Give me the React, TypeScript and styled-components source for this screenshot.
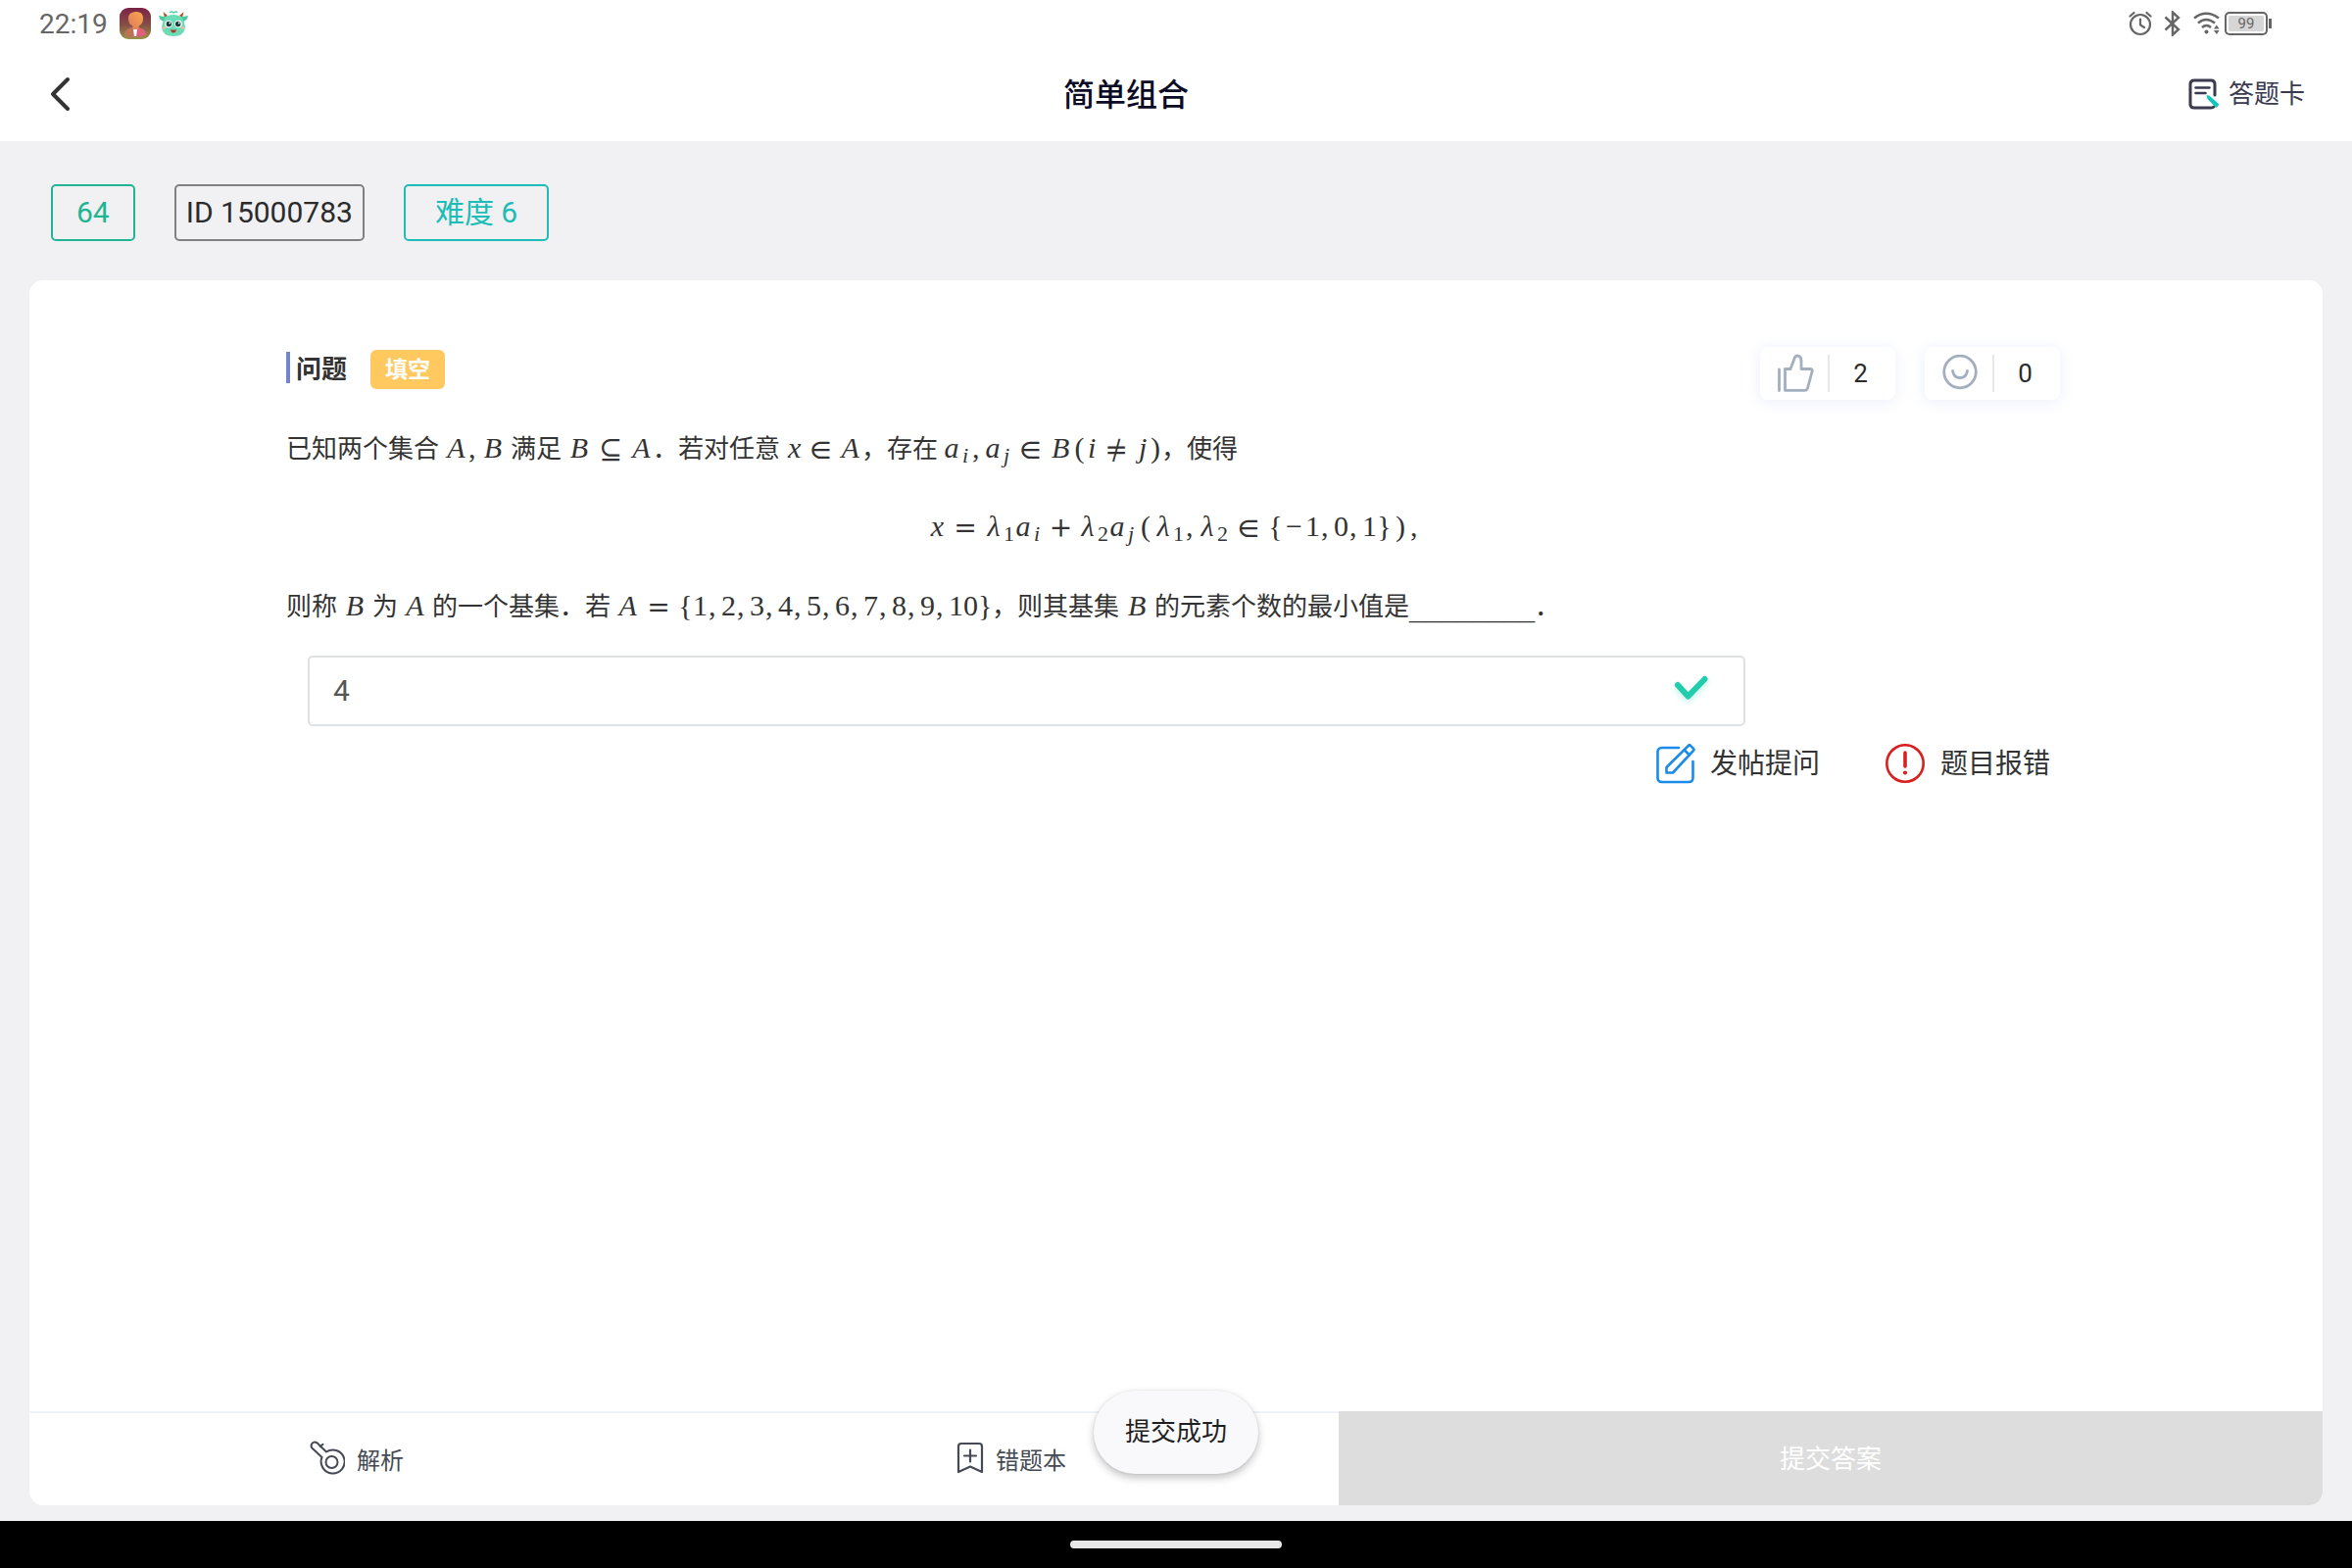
import React from "react";
import styled, { createGlobalStyle } from "styled-components";

const sans = `Roboto, "Noto Sans CJK SC", sans-serif`;
const cjk = `"Noto Sans CJK SC", Roboto, sans-serif`;

const GlobalStyle = createGlobalStyle`
  *, *::before, *::after { box-sizing: border-box; }
  body { margin: 0; background: #f1f1f4; font-family: ${sans}; color: #333; }
  button { border: 0; padding: 0; background: none; font: inherit; color: inherit; cursor: pointer; }
  svg { display: block; flex: none; }
`;

const Page = styled.div`
  display: flex;
  flex-direction: column;
  min-height: 100vh;
`;

const StatusBar = styled.div`
  display: flex;
  align-items: center;
  justify-content: space-between;
  height: 48px;
  padding: 0 82px 0 40px;
  background: #fff;
  color: #666;
`;

const StatusGroup = styled.div<{ $gap: number }>`
  display: flex;
  align-items: center;
  gap: ${(p) => p.$gap}px;
`;

const Clock = styled.time`
  margin-right: 4px;
  padding-top: 2px;
  font-size: 28px;
  line-height: 46px;
`;

const Header = styled.header`
  display: flex;
  align-items: center;
  height: 96px;
  padding: 0 48px;
  background: #fff;
`;

const BackButton = styled.button`
  display: flex;
  padding: 4px 0;
`;

const Title = styled.h1`
  flex: 1;
  margin: 0;
  padding: 0 6px 4px 0;
  text-align: center;
  font-family: ${cjk};
  font-size: 32px;
  font-weight: 500;
  line-height: 48px;
  color: #0b0b26;
`;

const SheetButton = styled.button`
  display: flex;
  align-items: center;
  gap: 8px;
  font-size: 26px;
  line-height: 40px;
  color: #3a3a50;
`;

const Main = styled.main`
  flex: 1;
  display: flex;
  flex-direction: column;
  padding: 44px 30px 16px;
`;

const Tags = styled.div`
  display: flex;
  gap: 40px;
  height: 98px;
  padding: 0 22px 40px;
`;

const Tag = styled.span<{ $color: string; $text?: string; $pad: number }>`
  border: 2px solid ${(p) => p.$color};
  border-radius: 5px;
  padding: 0 ${(p) => p.$pad}px;
  font-size: 30px;
  line-height: 54px;
  color: ${(p) => p.$text || p.$color};
`;

const Card = styled.section`
  flex: 1;
  display: flex;
  flex-direction: column;
  border-radius: 14px;
  background: #fff;
  overflow: hidden;
`;

const Question = styled.article`
  flex: 1;
  padding: 68px 262px 0;
`;

const QuestionHead = styled.div`
  display: flex;
  align-items: center;
  justify-content: space-between;
  margin-bottom: 28px;
  padding-right: 6px;
`;

const Heading = styled.div`
  display: flex;
  align-items: center;
  height: 54px;
  padding-bottom: 12px;
`;

const SectionTitle = styled.h2`
  margin: 0 24px 0 0;
  border-left: 4px solid #7385d0;
  padding-left: 6px;
  font-family: ${cjk};
  font-size: 26px;
  font-weight: 600;
  line-height: 32px;
  color: #333;
`;

const Kind = styled.span`
  border-radius: 6px;
  padding: 0 15px 4px;
  margin-top: 4px;
  background: #ffc95f;
  color: #fff;
  font-family: ${cjk};
  font-size: 23px;
  font-weight: 700;
  line-height: 36px;
`;

const Votes = styled.div`
  display: flex;
  gap: 30px;
`;

const Vote = styled.button`
  display: flex;
  align-items: center;
  width: 138px;
  height: 54px;
  padding-left: 17px;
  border-radius: 8px;
  background: #fff;
  box-shadow: 0 2px 14px rgba(90, 120, 220, 0.13);
  font-size: 26px;
  color: #2b2b2b;
`;

const VoteCount = styled.span`
  flex: 1;
  margin-left: 14px;
  padding-right: 4px;
  border-left: 2px solid #e6e7ec;
  text-align: center;
  line-height: 38px;
`;

const Text = styled.p<{ $center?: boolean }>`
  display: flex;
  flex-wrap: wrap;
  align-items: baseline;
  justify-content: ${(p) => (p.$center ? "center" : "flex-start")};
  margin: 0 0 40px;
  font-family: ${cjk};
  font-size: 26px;
  line-height: 40px;
  color: #333;
`;

const MathRow = styled.span<{ $before: number; $after: number }>`
  display: inline-flex;
  align-items: baseline;
  margin: 0 ${(p) => p.$after}px 0 ${(p) => p.$before}px;
  font-family: "Liberation Serif", serif;
  font-size: 30px;
  line-height: 40px;
`;

const Glyph = styled.span<{ $w: number }>`
  width: ${(p) => p.$w}px;
  text-align: center;
`;

const Variable = styled(Glyph)`
  font-style: italic;
`;

const Comma = styled.span`
  width: 14px;
  padding-left: 1px;
`;

const Relation = styled(Glyph)`
  font-family: "DejaVu Math TeX Gyre", "DejaVu Serif", serif;
  font-size: 28px;
  line-height: 20px;
`;

const Sub = styled.sub<{ $italic?: boolean }>`
  width: ${(p) => (p.$italic ? 12 : 13)}px;
  text-align: center;
  position: relative;
  top: 5px;
  vertical-align: baseline;
  font-size: 22px;
  line-height: 20px;
  font-style: ${(p) => (p.$italic ? "italic" : "normal")};
`;

const Blank = styled.span`
  font-family: "DejaVu Sans", sans-serif;
  font-size: 32px;
  font-weight: 200;
  line-height: 20px;
`;

const AnswerRow = styled.label`
  display: flex;
  align-items: center;
  width: 1467px;
  max-width: 100%;
  height: 72px;
  margin: -9px 0 0 22px;
  padding: 0 30px 0 24px;
  border: 2px solid #dde1e6;
  border-radius: 5px;
`;

const AnswerInput = styled.input`
  flex: 1;
  min-width: 0;
  border: 0;
  padding: 0;
  outline: 0;
  background: transparent;
  font-family: ${sans};
  font-size: 30px;
  line-height: 40px;
  color: #555;
`;

const Actions = styled.div`
  display: flex;
  justify-content: flex-end;
  gap: 66px;
  margin-top: 18px;
  padding-right: 16px;
`;

const Action = styled.button`
  display: flex;
  align-items: center;
  gap: 15px;
  font-size: 28px;
  line-height: 42px;
  color: #333;
`;

const BottomBar = styled.footer`
  position: relative;
  display: flex;
  height: 96px;
`;

const Tools = styled.div`
  flex: 1336;
  display: flex;
  border-top: 2px solid #eff3f8;
`;

const Tool = styled.button`
  flex: 1;
  display: flex;
  align-items: center;
  justify-content: center;
  gap: 12px;
  padding-bottom: 2px;
  font-size: 24px;
  color: #454a54;
`;

const Submit = styled.button`
  flex: 1004;
  padding-bottom: 4px;
  background: #ddd;
  font-size: 26px;
  color: #fff;
`;

const Toast = styled.div`
  position: absolute;
  left: 50%;
  bottom: 32px;
  transform: translateX(-50%);
  padding: 22px 32px 23px;
  border-radius: 43px;
  background: #f9f9fc;
  box-shadow: 0 4px 8px rgba(0, 0, 0, 0.24), 0 0 3px rgba(0, 0, 0, 0.08);
  font-size: 26px;
  line-height: 40px;
  white-space: nowrap;
  color: #1f1f22;
`;

const NavBar = styled.div`
  display: flex;
  justify-content: center;
  height: 48px;
  padding-top: 20px;
  background: #000;
`;

const NavHandle = styled.div`
  width: 216px;
  height: 8px;
  border-radius: 4px;
  background: #e9e9e9;
`;

const PortraitIcon = () => (
  <svg width="32" height="36" viewBox="0 0 32 36">
    <defs>
      <linearGradient id="pbg" x1="0" y1="0" x2="0" y2="1">
        <stop offset="0" stopColor="#7c2146" />
        <stop offset="0.55" stopColor="#855046" />
        <stop offset="1" stopColor="#9a9348" />
      </linearGradient>
      <linearGradient id="pface" x1="1" y1="0" x2="0" y2="1">
        <stop offset="0" stopColor="#f5a94c" />
        <stop offset="1" stopColor="#e0785c" />
      </linearGradient>
    </defs>
    <rect y="2" width="32" height="32" rx="9" fill="url(#pbg)" />
    <path d="M5 30c0-5 4-7 8-8h6c5 1 8 3 8 8q-11 3-22 0z" fill="#e0607c" />
    <path d="M5 30c0-5 4-7 8-8l1 9q-5 0-9-1z" fill="#b97450" />
    <path d="M9 12c0-4 4-6 8-6s7 2 7 6-1 7-4 8l-1 4h-5l-1-4c-3-1-4-4-4-8z" fill="url(#pface)" />
    <path d="M14 24h4l-1 7h-2z" fill="#fff" />
  </svg>
);

const CalfIcon = () => (
  <svg width="30" height="28" viewBox="0 0 30 28">
    <path d="M11 3q2-2 4 0 3-2 4 0" fill="none" stroke="#56cfa8" strokeWidth="1.5" />
    <path d="M6 8 4.500 2 9 6zM24 8l1.500-6L21 6z" fill="#a3552f" />
    <path d="M0 6q4 1 7 1v5q-6 0-7-6zM30 6q-4 1-7 1v5q6 0 7-6z" fill="#4cc79f" />
    <path d="M7 7q8-4 16 0 3 4 4 11-1 9-12 9T3 18Q4 11 7 7z" fill="#6bdcb6" />
    <circle cx="10" cy="14.500" r="3.800" fill="#fff" />
    <circle cx="20" cy="14.500" r="3.800" fill="#fff" />
    <circle cx="10.300" cy="14.500" r="2.700" fill="#173a35" />
    <circle cx="19.700" cy="14.500" r="2.700" fill="#173a35" />
    <circle cx="11.300" cy="13.500" r="0.900" fill="#fff" />
    <circle cx="20.700" cy="13.500" r="0.900" fill="#fff" />
    <circle cx="5.500" cy="18.500" r="1.600" fill="#f3b9a0" />
    <circle cx="24.500" cy="18.500" r="1.600" fill="#f3b9a0" />
    <path d="M12 20q3 1 6 0-.5 3.500-3 3.500T12 20z" fill="#b03a2c" />
  </svg>
);

const AlarmIcon = () => (
  <svg width="24" height="26" viewBox="0 0 24 26" fill="none" stroke="#666" strokeWidth="2.200" strokeLinecap="round">
    <circle cx="12" cy="14" r="10" />
    <path d="M12 8.500v6l4 2.500M1.500 5.500l4-3.500M22.500 5.500l-4-3.500" />
  </svg>
);

const BluetoothIcon = () => (
  <svg width="18" height="26" viewBox="0 0 18 26" fill="none" stroke="#666" strokeWidth="2.400">
    <path d="M1.500 6.500 15 19l-6 5.500v-23L15 7 1.500 19.500" />
  </svg>
);

const WifiIcon = () => (
  <svg width="28" height="26" viewBox="0 0 28 26">
    <g fill="none" stroke="#666" strokeWidth="2.500">
      <path d="M1 7.500q12-9.500 25 0M5 12.500q8-7 17 0M9 17q4.500-4 9 0" />
    </g>
    <circle cx="13.500" cy="21.500" r="2" fill="#666" />
    <path d="M21 18.500l2.800-4 2.800 4zM21 20l2.800 4 2.800-4z" fill="#666" />
  </svg>
);

const BatteryShell = styled.span`
  display: flex;
  align-items: center;
  &::after {
    content: "";
    width: 3px;
    height: 10px;
    margin-left: 1px;
    background: #666;
  }
`;

const BatteryLevel = styled.span`
  width: 44px;
  height: 24px;
  border: 2px solid #666;
  border-radius: 5px;
  padding: 2px;
  background: #d6d6d6;
  box-shadow: inset 0 0 0 2px #fff;
  text-align: center;
  font-size: 15px;
  line-height: 17px;
`;

const BackIcon = () => (
  <svg width="24" height="36" viewBox="0 0 24 36" fill="none" stroke="#333" strokeWidth="4" strokeLinecap="round" strokeLinejoin="round">
    <path d="M21 3 6 18l15 15" />
  </svg>
);

const SheetIcon = () => (
  <svg width="34" height="32" viewBox="0 0 34 32" fill="none" strokeLinecap="round">
    <path d="M28 17V6q0-4-4-4H7Q3 2 3 6v20q0 4 4 4h17q2 0 3-1" stroke="#3a3a50" strokeWidth="3" />
    <path d="M8.500 9.500h14M8.500 15h10" stroke="#3a3a50" strokeWidth="2.600" />
    <path d="m19.500 17 3 .8 10 8.700-3 3.500-9-9z" fill="#0fc6bd" />
  </svg>
);

const ThumbIcon = () => (
  <svg width="38" height="40" viewBox="0 0 38 40" fill="none" stroke="#a3aebf" strokeWidth="2.800" strokeLinecap="round" strokeLinejoin="round">
    <path d="M2.500 16v21.500M8.500 15.500h5.500L18.500 3.500Q20 1.300 22.500 2.300q2.500 1 2.500 5v8.200h9q3 0 2 3l-4.500 16.500q-.5 2.300-3 2.300h-20z" />
  </svg>
);

const SmileIcon = () => (
  <svg width="38" height="40" viewBox="0 0 38 40" fill="none" stroke="#a3aebf" strokeWidth="2.800" strokeLinecap="round">
    <circle cx="19" cy="18.500" r="16.300" />
    <path d="M11.500 17.500q1 7 7.500 7t7.500-7" />
  </svg>
);

const CheckIcon = () => (
  <svg width="46" height="40" viewBox="0 0 46 40" fill="none" strokeLinecap="round" strokeLinejoin="round">
    <defs>
      <filter id="soft" x="-30%" y="-30%" width="160%" height="180%">
        <feDropShadow dx="0" dy="3" stdDeviation="3" floodColor="#1fcfac" floodOpacity="0.25" />
      </filter>
    </defs>
    <path d="m9 14 10.500 11.500L36.500 8" stroke="#20cdab" strokeWidth="6" filter="url(#soft)" />
  </svg>
);

const EditIcon = () => (
  <svg width="40" height="42" viewBox="0 0 40 42" fill="none" stroke="#1a8be8" strokeWidth="2.600" strokeLinecap="round" strokeLinejoin="round">
    <path d="M23 4H6Q1.500 4 1.500 8.500v26Q1.500 39 6 39h27q4.500 0 4.500-4.500V18" />
    <path d="M10.500 24 33 1.800q1-1 2 0l3 3q1 1 0 2L17 29.500h-6.500zM28.500 6l5.500 5.500" />
  </svg>
);

const AlertIcon = () => (
  <svg width="42" height="42" viewBox="0 0 42 42">
    <circle cx="21" cy="20" r="18.700" fill="none" stroke="#d8201f" strokeWidth="2.600" />
    <path d="M21 9v14" stroke="#d8201f" strokeWidth="3.600" strokeLinecap="round" />
    <circle cx="21" cy="29.500" r="2.100" fill="#d8201f" />
  </svg>
);

const KeyIcon = () => (
  <svg width="36" height="36" viewBox="0 0 36 36" fill="none" stroke="#454a54" strokeWidth="2" strokeLinecap="round" strokeLinejoin="round">
    <circle cx="22.500" cy="22" r="6" />
    <path d="M12.500 17 2.300 7.500Q.7 5 2.500 2.800 5 .6 7.500 2.300L17 11.500A12 12 0 1 1 12.500 17M10.800 6l2.700-2.200" />
  </svg>
);

const BookmarkIcon = () => (
  <svg width="28" height="34" viewBox="0 0 28 34" fill="none" stroke="#454a54" strokeWidth="2.200" strokeLinecap="round" strokeLinejoin="round">
    <path d="M2 31V5q0-3 3-3h18q3 0 3 3v26l-12-5.500zM14 8.500v12M8 14.500h12" />
  </svg>
);

type Token = [kind: string, text: string, width?: number];

const advance: Record<string, number> = { A: 23, B: 24, x: 17, a: 16, i: 10, j: 14, "λ": 18 };

/* v variable, n upright glyph, r relation, c comma, s/si subscript */
const Formula = ({ tokens, before = 6, after = 6 }: { tokens: Token[]; before?: number; after?: number }) => (
  <MathRow $before={before} $after={after}>
    {tokens.map(([kind, text, width], i) => {
      if (kind === "v") return <Variable key={i} $w={width || advance[text]}>{text}</Variable>;
      if (kind === "r") return <Relation key={i} $w={width || 40}>{text}</Relation>;
      if (kind === "c") return <Comma key={i}>,</Comma>;
      if (kind === "s") return <Sub key={i}>{text}</Sub>;
      if (kind === "si") return <Sub key={i} $italic>{text}</Sub>;
      return <Glyph key={i} $w={width || 15}>{text}</Glyph>;
    })}
  </MathRow>
);

const setTokens: Token[] = ["1", "2", "3", "4", "5", "6", "7", "8", "9"].flatMap(
  (d): Token[] => [["n", d], ["c", ","]]
);

export default function App() {
  const [answer, setAnswer] = React.useState("4");
  return (
    <Page>
      <GlobalStyle />
      <StatusBar>
        <StatusGroup $gap={8}>
          <Clock>22:19</Clock>
          <PortraitIcon />
          <CalfIcon />
        </StatusGroup>
        <StatusGroup $gap={12}>
          <AlarmIcon />
          <BluetoothIcon />
          <StatusGroup $gap={4}>
            <WifiIcon />
            <BatteryShell>
              <BatteryLevel>99</BatteryLevel>
            </BatteryShell>
          </StatusGroup>
        </StatusGroup>
      </StatusBar>
      <Header>
        <BackButton aria-label="返回">
          <BackIcon />
        </BackButton>
        <Title>简单组合</Title>
        <SheetButton>
          <SheetIcon />
          答题卡
        </SheetButton>
      </Header>
      <Main>
        <Tags>
          <Tag $color="#1fb592" $pad={24}>64</Tag>
          <Tag $color="#808080" $text="#2b2b2b" $pad={10}>ID 15000783</Tag>
          <Tag $color="#1bbdb6" $pad={30}>难度 6</Tag>
        </Tags>
        <Card>
          <Question>
            <QuestionHead>
              <Heading>
                <SectionTitle>问题</SectionTitle>
                <Kind>填空</Kind>
              </Heading>
              <Votes>
                <Vote aria-label="点赞">
                  <ThumbIcon />
                  <VoteCount>2</VoteCount>
                </Vote>
                <Vote aria-label="表情">
                  <SmileIcon />
                  <VoteCount>0</VoteCount>
                </Vote>
              </Votes>
            </QuestionHead>
            <Text>
              已知两个集合
              <Formula tokens={[["v", "A"], ["c", ","], ["v", "B"]]} />
              满足
              <Formula after={0} tokens={[["v", "B"], ["r", "⊆"], ["v", "A"]]} />
              ．若对任意
              <Formula after={0} tokens={[["v", "x"], ["r", "∈", 37], ["v", "A"]]} />
              ，存在
              <Formula
                after={0}
                tokens={[
                  ["v", "a"], ["si", "i"], ["c", ","], ["v", "a"], ["si", "j"], ["r", "∈", 37], ["v", "B"],
                  ["n", "("], ["v", "i"], ["r", "≠"], ["v", "j"], ["n", ")", 12],
                ]}
              />
              ，使得
            </Text>
            <Text $center>
              <Formula
                before={0}
                after={0}
                tokens={[
                  ["v", "x"], ["r", "="], ["v", "λ"], ["s", "1"], ["v", "a"], ["si", "i"], ["r", "+", 37],
                  ["v", "λ"], ["s", "2"], ["v", "a"], ["si", "j"], ["n", "(", 18], ["v", "λ"], ["s", "1"], ["c", ","],
                  ["v", "λ"], ["s", "2"], ["r", "∈", 40], ["n", "{"], ["n", "−", 23], ["n", "1"], ["c", ","],
                  ["n", "0"], ["c", ","], ["n", "1"], ["n", "}"], ["n", ")", 18], ["c", ","],
                ]}
              />
            </Text>
            <Text>
              则称
              <Formula tokens={[["v", "B"]]} />
              为
              <Formula tokens={[["v", "A"]]} />
              的一个基集．若
              <Formula
                after={0}
                tokens={[["v", "A"], ["r", "="], ["n", "{"], ...setTokens, ["n", "10", 30], ["n", "}", 14]]}
              />
              ，则其基集
              <Formula tokens={[["v", "B"]]} />
              的元素个数的最小值是
              <Blank>________</Blank>
              ．
            </Text>
            <AnswerRow>
              <AnswerInput aria-label="答案" value={answer} onChange={(e) => setAnswer(e.target.value)} />
              <CheckIcon />
            </AnswerRow>
            <Actions>
              <Action>
                <EditIcon />
                发帖提问
              </Action>
              <Action>
                <AlertIcon />
                题目报错
              </Action>
            </Actions>
          </Question>
          <BottomBar>
            <Tools>
              <Tool>
                <KeyIcon />
                解析
              </Tool>
              <Tool>
                <BookmarkIcon />
                错题本
              </Tool>
            </Tools>
            <Submit>提交答案</Submit>
            <Toast role="status">提交成功</Toast>
          </BottomBar>
        </Card>
      </Main>
      <NavBar>
        <NavHandle />
      </NavBar>
    </Page>
  );
}
